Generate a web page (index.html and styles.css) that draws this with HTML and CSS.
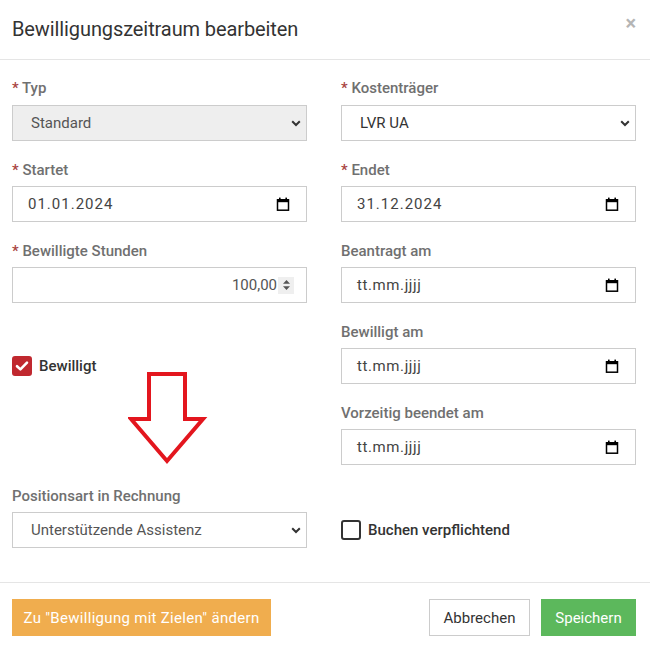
FILE: index.html
```html
<!DOCTYPE html>
<html lang="de">
<head>
<meta charset="utf-8">
<link rel="stylesheet" href="styles.css">
</head>
<body>
<div class="modal">
  <div class="header">
    <h4 class="title">Bewilligungszeitraum bearbeiten</h4>
    <span class="close">×</span>
  </div>
  <div class="body">
    <div class="row">
      <div class="group">
        <label class="lbl"><span class="req">*</span> Typ</label>
        <div class="input select disabled"><span class="sel-text">Standard</span>
          <svg class="chev" width="10" height="7" viewBox="0 0 10 7"><path d="M1.2 1.2 L5 5 L8.8 1.2" fill="none" stroke="#333" stroke-width="2"/></svg></div>
      </div>
      <div class="group">
        <label class="lbl"><span class="req">*</span> Kostenträger</label>
        <div class="input select"><span class="sel-text dark">LVR UA</span>
          <svg class="chev" width="10" height="7" viewBox="0 0 10 7"><path d="M1.2 1.2 L5 5 L8.8 1.2" fill="none" stroke="#333" stroke-width="2"/></svg></div>
      </div>
    </div>
    <div class="row">
      <div class="group">
        <label class="lbl"><span class="req">*</span> Startet</label>
        <div class="input date"><span class="date-text">01.01.2024</span>
          <svg class="cal" width="14" height="14" viewBox="0 0 14 14"><rect x="1.5" y="2.8" width="11" height="10.4" fill="none" stroke="#000" stroke-width="1.5"/><rect x="1" y="2.2" width="12" height="3" fill="#000"/><rect x="3" y="0.6" width="1.6" height="2.4" fill="#000"/><rect x="9.4" y="0.6" width="1.6" height="2.4" fill="#000"/></svg></div>
      </div>
      <div class="group">
        <label class="lbl"><span class="req">*</span> Endet</label>
        <div class="input date"><span class="date-text">31.12.2024</span>
          <svg class="cal" width="14" height="14" viewBox="0 0 14 14"><rect x="1.5" y="2.8" width="11" height="10.4" fill="none" stroke="#000" stroke-width="1.5"/><rect x="1" y="2.2" width="12" height="3" fill="#000"/><rect x="3" y="0.6" width="1.6" height="2.4" fill="#000"/><rect x="9.4" y="0.6" width="1.6" height="2.4" fill="#000"/></svg></div>
      </div>
    </div>
    <div class="row">
      <div class="group">
        <label class="lbl"><span class="req">*</span> Bewilligte Stunden</label>
        <div class="input number"><span class="num-text">100,00</span>
          <span class="spin"><svg width="9" height="12" viewBox="0 0 9 12"><path d="M4.5 1 L8 4.8 L1 4.8 Z M4.5 11 L8 7.2 L1 7.2 Z" fill="#555"/></svg></span></div>
      </div>
      <div class="group">
        <label class="lbl">Beantragt am</label>
        <div class="input date"><span class="date-text ph">tt.mm.jjjj</span>
          <svg class="cal" width="14" height="14" viewBox="0 0 14 14"><rect x="1.5" y="2.8" width="11" height="10.4" fill="none" stroke="#000" stroke-width="1.5"/><rect x="1" y="2.2" width="12" height="3" fill="#000"/><rect x="3" y="0.6" width="1.6" height="2.4" fill="#000"/><rect x="9.4" y="0.6" width="1.6" height="2.4" fill="#000"/></svg></div>
      </div>
    </div>
    <div class="row">
      <div class="cell-check">
        <div class="check">
          <span class="box checked"><svg width="14" height="12" viewBox="0 0 14 12"><path d="M2 6.2 L5.4 9.4 L12 2.6" fill="none" stroke="#fff" stroke-width="2.6" stroke-linecap="round" stroke-linejoin="round"/></svg></span>
          <span class="check-lbl">Bewilligt</span>
        </div>
      </div>
      <div>
        <div class="group">
          <label class="lbl">Bewilligt am</label>
          <div class="input date"><span class="date-text ph">tt.mm.jjjj</span>
            <svg class="cal" width="14" height="14" viewBox="0 0 14 14"><rect x="1.5" y="2.8" width="11" height="10.4" fill="none" stroke="#000" stroke-width="1.5"/><rect x="1" y="2.2" width="12" height="3" fill="#000"/><rect x="3" y="0.6" width="1.6" height="2.4" fill="#000"/><rect x="9.4" y="0.6" width="1.6" height="2.4" fill="#000"/></svg></div>
        </div>
        <div class="group">
          <label class="lbl">Vorzeitig beendet am</label>
          <div class="input date"><span class="date-text ph">tt.mm.jjjj</span>
            <svg class="cal" width="14" height="14" viewBox="0 0 14 14"><rect x="1.5" y="2.8" width="11" height="10.4" fill="none" stroke="#000" stroke-width="1.5"/><rect x="1" y="2.2" width="12" height="3" fill="#000"/><rect x="3" y="0.6" width="1.6" height="2.4" fill="#000"/><rect x="9.4" y="0.6" width="1.6" height="2.4" fill="#000"/></svg></div>
        </div>
      </div>
    </div>
    <div class="row row-last">
      <div class="group last">
        <label class="lbl">Positionsart in Rechnung</label>
        <div class="input select"><span class="sel-text">Unterstützende Assistenz</span>
          <svg class="chev" width="10" height="7" viewBox="0 0 10 7"><path d="M1.2 1.2 L5 5 L8.8 1.2" fill="none" stroke="#333" stroke-width="2"/></svg></div>
      </div>
      <div class="check check-end">
        <span class="box"></span>
        <span class="check-lbl">Buchen verpflichtend</span>
      </div>
    </div>
  </div>
  <div class="footer">
    <button class="btn btn-warning">Zu "Bewilligung mit Zielen" ändern</button>
    <div class="footer-right">
      <button class="btn btn-default">Abbrechen</button>
      <button class="btn btn-success">Speichern</button>
    </div>
  </div>
  <svg class="arrow" width="80" height="98" viewBox="0 0 80 98"><path d="M21 4 L57 4 L57 49 L75 49 L39 91 L3 49 L21 49 Z" fill="none" stroke="#e3161e" stroke-width="4" stroke-linejoin="miter"/></svg>
</div>
</body>
</html>
```
FILE: styles.css
```css
* { box-sizing: border-box; }
html, body { margin: 0; padding: 0; background: #fff; }
body { font-family: Roboto, "Liberation Sans", sans-serif; color: #333; }

.modal { position: relative; width: 650px; height: 652px; background: #fff; }

.header {
  height: 60px;
  padding: 0 14px 0 12px;
  border-bottom: 1px solid #e5e5e5;
  display: flex;
  align-items: center;
  justify-content: space-between;
}
.title { margin: 0; font-size: 20px; font-weight: 400; color: #333; padding-bottom: 2px; letter-spacing: -0.1px; }
.close { font-size: 20px; font-weight: 700; color: #b5b5b5; line-height: 1; margin-top: -14px; margin-right: 0; }

.body { padding: 18px 14px 34px 12px; }
.row { display: grid; grid-template-columns: 295px 295px; column-gap: 34px; }
.group { margin-bottom: 19px; }
.group.last { margin-bottom: 0; }
.lbl {
  display: block;
  height: 20px;
  line-height: 20px;
  margin-bottom: 7px;
  font-size: 15px;
  font-weight: 500;
  color: #707070;
}
.row + .row .group:first-child .lbl,
.row .group .lbl { margin-bottom: 6px; }
.row:first-child .group .lbl { margin-bottom: 7px; }
.req { color: #a94442; }

.input {
  height: 36px;
  border: 1px solid #ccc;
  background: #fff;
  display: flex;
  align-items: center;
  justify-content: space-between;
  font-size: 15px;
  color: #555;
}
.select { padding: 0 5px 0 18px; }
.select.disabled { background: #eee; }
.sel-text { color: #555; }
.sel-text.dark { color: #333; }
.date { padding: 0 16px 0 15px; }
.date-text { letter-spacing: 1px; color: #444; }
.date-text.ph { letter-spacing: 0.6px; }
.cal { display: block; }
.number { justify-content: flex-end; padding: 0 12px 0 15px; }
.num-text { color: #555; }
.spin {
  width: 16px; height: 17px; background: #efefef;
  display: flex; align-items: center; justify-content: center; margin-left: 1px;
}

.cell-check { padding-top: 34px; }
.check { display: flex; align-items: center; height: 20px; }
.box {
  width: 20px; height: 20px; border: 2px solid #333; border-radius: 3px;
  display: flex; align-items: center; justify-content: center; background: #fff;
}
.box.checked { background: #c0282f; border-color: #c0282f; }
.check-lbl { margin-left: 7px; font-size: 15px; font-weight: 500; color: #333; }

.row-last { align-items: end; }
.row-last .group { padding-top: 2px; }
.check-end { height: 36px; }

.footer {
  border-top: 1px solid #e5e5e5;
  padding: 16px 14px 16px 12px;
  display: flex;
  justify-content: space-between;
  align-items: center;
}
.footer-right { display: flex; gap: 11px; }
.btn {
  height: 37px;
  font-family: Roboto, "Liberation Sans", sans-serif;
  font-size: 15px;
  border: 1px solid transparent;
  border-radius: 0;
  padding: 0 8px;
  white-space: nowrap;
  cursor: pointer;
}
.btn-warning { background: #f0ad4e; color: #fff; width: 259px; letter-spacing: 0.3px; }
.btn-default { background: #fff; border-color: #ccc; color: #333; width: 101px; }
.btn-success { background: #5cb85c; color: #fff; width: 95px; }

.arrow { position: absolute; left: 128px; top: 370px; }
```
